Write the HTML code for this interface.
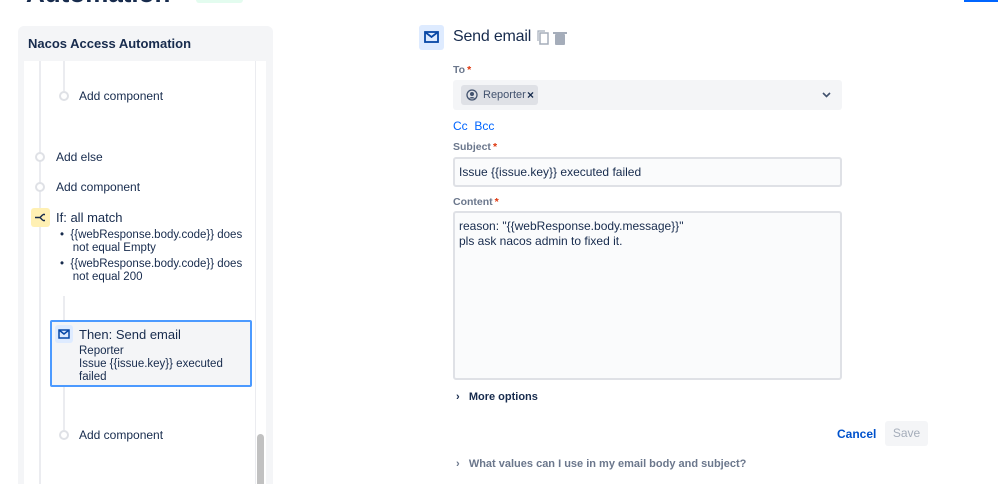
<!DOCTYPE html>
<html><head><style>
*{box-sizing:border-box;margin:0;padding:0}
html,body{width:998px;height:484px;overflow:hidden}
body{background:#fff;font-family:"Liberation Sans",sans-serif;color:#172b4d;position:relative}
.a{position:absolute}
.t{font-size:12px;white-space:nowrap}
.dot{position:absolute;width:10px;height:10px;border:2px solid #dfe1e6;border-radius:50%;background:#fff}
.lbl{font-size:10.5px;font-weight:bold;color:#6b778c}
.lbl i{color:#de350b;font-style:normal;margin-left:2px}
</style></head><body>
<div class="a" style="left:26px;top:-22px;font-size:26px;font-weight:bold;color:#172b4d">Automation</div>
<div class="a" style="left:196px;top:0;width:47px;height:3px;background:#e3fcef;border-radius:0 0 3px 3px"></div>
<div class="a" style="left:964px;top:0;width:34px;height:2px;background:#0065ff"></div>

<div class="a" style="left:18px;top:26px;width:255px;height:470px;background:#f4f5f7;border-radius:6px"></div>
<div class="a" style="left:28px;top:36px;font-size:13px;font-weight:bold">Nacos Access Automation</div>
<div class="a" style="left:24px;top:61px;width:242px;height:430px;background:#fff"></div>
<div class="a" style="left:255px;top:61px;width:1px;height:430px;background:#ebecf0"></div>
<div class="a" style="left:257px;top:434px;width:7px;height:60px;background:#c1c1c1;border-radius:4px"></div>
<div class="a" style="left:39px;top:61px;width:2px;height:430px;background:#ebecf0"></div>
<div class="a" style="left:63px;top:61px;width:2px;height:30px;background:#ebecf0"></div>
<div class="a" style="left:63px;top:296px;width:2px;height:134px;background:#ebecf0"></div>
<div class="dot" style="left:59px;top:91px"></div>
<div class="a t" style="left:79px;top:89px">Add component</div>
<div class="dot" style="left:35px;top:152px"></div>
<div class="a t" style="left:56px;top:150px">Add else</div>
<div class="dot" style="left:35px;top:182px"></div>
<div class="a t" style="left:56px;top:180px">Add component</div>
<div class="a" style="left:31px;top:208px;width:19px;height:19px;background:#fff0b3;border-radius:3px"></div>
<svg class="a" style="left:34px;top:211px" width="13" height="13"><path d="M1 6.5h5M6 6.5l3-3M6 6.5l3 3M9 3.5h2M9 9.5h2" fill="none" stroke="#172b4d" stroke-width="1.4"/></svg>
<div class="a" style="left:56px;top:210px;font-size:13px">If: all match</div>
<div class="a" style="left:60px;top:229px;font-size:11.5px;line-height:13px;width:200px">
<div>•&nbsp;&nbsp;{{webResponse.body.code}} does<br>&nbsp;&nbsp;&nbsp;&nbsp;not equal Empty</div>
<div style="margin-top:3px">•&nbsp;&nbsp;{{webResponse.body.code}} does<br>&nbsp;&nbsp;&nbsp;&nbsp;not equal 200</div></div>
<div class="a" style="left:50px;top:320px;width:202px;height:67px;background:#f4f5f7;border:2px solid #4c9aff;border-radius:2px"></div>
<div class="a" style="left:55px;top:325px;width:18px;height:18px;background:#deebff;border-radius:3px"></div>
<svg class="a" style="left:58px;top:329px" width="12" height="10"><rect x="1" y="1" width="10" height="8" fill="none" stroke="#0747a6" stroke-width="1.5"/><path d="M1 1l5 4 5-4" fill="none" stroke="#0747a6" stroke-width="1.5"/></svg>
<div class="a" style="left:79px;top:327px;font-size:13px">Then: Send email</div>
<div class="a" style="left:79px;top:345px;font-size:11.5px;line-height:13px">Reporter<br>Issue {{issue.key}} executed<br>failed</div>
<div class="dot" style="left:59px;top:430px"></div>
<div class="a t" style="left:79px;top:428px">Add component</div>

<div class="a" style="left:419px;top:25px;width:25px;height:25px;background:#deebff;border-radius:3px"></div>
<svg class="a" style="left:424px;top:31px" width="15" height="12"><rect x="1" y="1" width="13" height="10" fill="none" stroke="#0747a6" stroke-width="1.8"/><path d="M1 1l6.5 5 6.5-5" fill="none" stroke="#0747a6" stroke-width="1.8"/></svg>
<div class="a" style="left:453px;top:28px;font-size:16px;letter-spacing:-0.2px">Send email</div>
<svg class="a" style="left:537px;top:30px" width="32" height="16"><rect x="3" y="3" width="8" height="11" fill="none" stroke="#a5adba" stroke-width="1.5"/><path d="M1 11V1h7" fill="none" stroke="#a5adba" stroke-width="1.2"/><rect x="18" y="4" width="10" height="11" rx="1" fill="#a5adba"/><rect x="16" y="2" width="14" height="2" fill="#a5adba"/></svg>
<div class="a lbl" style="left:453px;top:64px">To<i>*</i></div>
<div class="a" style="left:453px;top:80px;width:389px;height:30px;background:#f4f5f7;border-radius:3px"></div>
<div class="a" style="left:461px;top:85px;width:77px;height:20px;background:#dfe1e6;border-radius:3px"></div>
<svg class="a" style="left:466px;top:89px" width="12" height="12"><circle cx="6" cy="6" r="5" fill="none" stroke="#42526e" stroke-width="1.3"/><circle cx="6" cy="5" r="2" fill="#42526e"/><path d="M3 9.5a3.5 3 0 0 1 6 0" fill="#42526e"/></svg>
<div class="a" style="left:483px;top:89px;font-size:11px;color:#42526e">Reporter</div>
<div class="a" style="left:527px;top:88px;font-size:12px;font-weight:bold">×</div>
<svg class="a" style="left:822px;top:92px" width="9" height="6"><path d="M1 1l3.5 3.5L8 1" fill="none" stroke="#42526e" stroke-width="1.6"/></svg>
<div class="a" style="left:453px;top:119px;font-size:12px;color:#0065ff">Cc&nbsp;&nbsp;Bcc</div>
<div class="a lbl" style="left:453px;top:141px">Subject<i>*</i></div>
<div class="a" style="left:453px;top:157px;width:389px;height:30px;background:#fafbfc;border:2px solid #dfe1e6;border-radius:3px"></div>
<div class="a t" style="left:459px;top:165px">Issue {{issue.key}} executed failed</div>
<div class="a lbl" style="left:453px;top:196px">Content<i>*</i></div>
<div class="a" style="left:453px;top:211px;width:389px;height:169px;background:#fafbfc;border:2px solid #dfe1e6;border-radius:3px"></div>
<div class="a" style="left:459px;top:219px;font-size:12px;line-height:15px">reason: "{{webResponse.body.message}}"<br>pls ask nacos admin to fixed it.</div>
<div class="a" style="left:456px;top:391px;font-size:11px;font-weight:bold">›&nbsp;&nbsp;&nbsp;More options</div>
<div class="a" style="left:837px;top:427px;font-size:12px;font-weight:bold;color:#0052cc">Cancel</div>
<div class="a" style="left:885px;top:421px;width:43px;height:25px;background:#f4f5f7;border-radius:3px;font-size:12px;color:#a5adba;text-align:center;line-height:25px">Save</div>
<div class="a" style="left:456px;top:458px;font-size:11px;font-weight:bold;color:#6b778c">›&nbsp;&nbsp;&nbsp;What values can I use in my email body and subject?</div>
</body></html>
